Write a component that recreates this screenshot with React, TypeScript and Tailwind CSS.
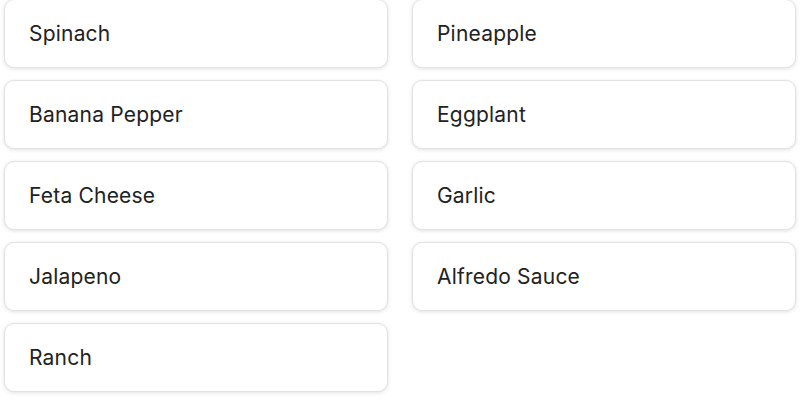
import React from "react";

const items = ["Spinach", "Pineapple", "Banana Pepper", "Eggplant", "Feta Cheese", "Garlic", "Jalapeno", "Alfredo Sauce", "Ranch"];

export default function App() {
  return (
    <div className="w-[800px] h-[400px] overflow-hidden bg-white" style={{ fontFamily: "Inter, 'Noto Sans', sans-serif" }}>
      <div className="grid grid-cols-2 gap-x-6 gap-y-3 px-[4px] mt-[-1px]">
        {items.map((t) => (
          <div
            key={t}
            className="h-[69px] rounded-[10px] border border-[#e2e2e2] bg-white shadow-[0_1px_4px_rgba(0,0,0,0.12)] flex items-center pl-[24px] text-[21px] text-[#222] tracking-[0.2px]"
          >
            {t}
          </div>
        ))}
      </div>
    </div>
  );
}
